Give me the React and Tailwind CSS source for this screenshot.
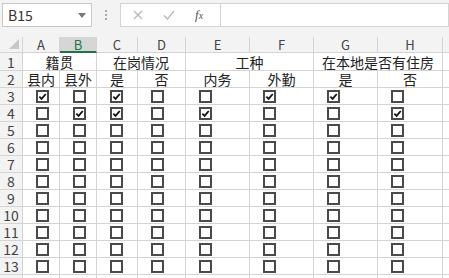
const COLS = [
  { key: 'A', w: 37 },
  { key: 'B', w: 37 },
  { key: 'C', w: 41 },
  { key: 'D', w: 48 },
  { key: 'E', w: 64 },
  { key: 'F', w: 64 },
  { key: 'G', w: 64 },
  { key: 'H', w: 65 },
]

const GROUPS = ['籍贯', '在岗情况', '工种', '在本地是否有住房']
const SUBS = ['县内', '县外', '是', '否', '内务', '外勤', '是', '否']

// checked columns per data row (row 3, row 4); the rest are empty
const CHECKED = {
  3: ['A', 'C', 'F', 'G'],
  4: ['B', 'C', 'E', 'H'],
}

const ROWS = [3, 4, 5, 6, 7, 8, 9, 10, 11, 12, 13]

function CheckBox({ checked }) {
  return (
    <span className="flex h-[13px] w-[13px] items-center justify-center border-2 border-[#4a4a4a] bg-white">
      {checked && (
        <svg viewBox="0 0 10 10" className="h-[9px] w-[9px]">
          <path d="M1.5 5.2 L4 7.6 L8.6 2.2" fill="none" stroke="#111" strokeWidth="2" />
        </svg>
      )}
    </span>
  )
}

function FormulaBar() {
  return (
    <div className="flex h-[37px] items-start bg-[#f3f3f3] pt-[3px]">
      <div className="ml-[2px] flex h-[24px] w-[90px] items-center justify-between border border-[#c8c8c8] bg-white pl-[5px] pr-[5px]">
        <span className="text-[14px] leading-[16px] text-[#333]">B15</span>
        <svg viewBox="0 0 8 5" className="h-[5px] w-[8px]">
          <path d="M0 0 L8 0 L4 5 Z" fill="#777" />
        </svg>
      </div>
      <div className="flex h-[24px] w-[28px] flex-col items-center justify-center gap-[2px]">
        <span className="h-[2px] w-[2px] bg-[#aaa]" />
        <span className="h-[2px] w-[2px] bg-[#aaa]" />
        <span className="h-[2px] w-[2px] bg-[#aaa]" />
      </div>
      <div className="flex h-[24px] w-[100px] items-center border border-r-0 border-[#d4d4d4] bg-white">
        <svg viewBox="0 0 10 10" className="ml-[12px] h-[10px] w-[10px]">
          <path d="M1 1 L9 9 M9 1 L1 9" stroke="#b5b5b5" strokeWidth="1.2" />
        </svg>
        <svg viewBox="0 0 12 10" className="ml-[20px] h-[10px] w-[12px]">
          <path d="M1 5.5 L4.5 9 L11 1" fill="none" stroke="#b5b5b5" strokeWidth="1.2" />
        </svg>
        <span className="ml-[20px] font-['Liberation_Serif',serif] text-[13px] leading-[16px] italic text-[#555]">
          f<span className="text-[10px]">x</span>
        </span>
      </div>
      <div className="h-[24px] flex-1 border border-[#d4d4d4] bg-white" />
    </div>
  )
}

export default function App() {
  const gridCols =
    'grid grid-cols-[23px_37px_37px_41px_48px_64px_64px_64px_65px_1fr] grid-rows-[16px_18px_17px_repeat(12,17px)]'

  return (
    <div className="h-[278px] w-[449px] overflow-hidden bg-white font-['Noto_Sans_CJK_SC','Noto_Sans',sans-serif] text-[#222]">
      <FormulaBar />

      <div className={gridCols}>
        {/* corner */}
        <div className="relative border-b border-r border-[#d4d4d4] bg-[#f3f3f3]">
          <svg viewBox="0 0 10 10" className="absolute bottom-[3px] right-[3px] h-[10px] w-[10px]">
            <path d="M10 0 L10 10 L0 10 Z" fill="#c8c8c8" />
          </svg>
        </div>
        {COLS.map((c) =>
          c.key === 'B' ? (
            <div
              key={c.key}
              className="flex items-center justify-center border-b-2 border-r border-b-[#217346] border-r-[#d4d4d4] bg-[#d6d6d6] pt-[1px] text-[13px] leading-[14px] text-[#217346]"
            >
              {c.key}
            </div>
          ) : (
            <div
              key={c.key}
              className="flex items-center justify-center border-b border-r border-[#d4d4d4] bg-[#f3f3f3] pt-[1px] text-[13px] leading-[14px] text-[#444]"
            >
              {c.key}
            </div>
          )
        )}
        <div className="border-b border-[#d4d4d4] bg-[#f3f3f3]" />

        {/* row 1: merged group titles */}
        <div className="flex items-center justify-center border-b border-r border-[#d4d4d4] bg-[#f3f3f3] text-[14px] leading-[16px] text-[#444]">
          1
        </div>
        {GROUPS.map((g) => (
          <div
            key={g}
            className="col-span-2 flex items-center justify-center border-b border-r border-[#d4d4d4] text-[14px] leading-[16px]"
          >
            {g}
          </div>
        ))}
        <div className="border-b border-[#d4d4d4]" />

        {/* row 2: sub titles */}
        <div className="flex items-center justify-center border-b border-r border-[#d4d4d4] bg-[#f3f3f3] text-[14px] leading-[16px] text-[#444]">
          2
        </div>
        {SUBS.map((s, i) => (
          <div
            key={i}
            className="flex items-center justify-center border-b border-r border-[#d4d4d4] text-[14px] leading-[16px]"
          >
            {s}
          </div>
        ))}
        <div className="border-b border-[#d4d4d4]" />

        {/* rows 3-13: checkboxes */}
        {ROWS.map((r) => (
          <Row key={r} n={r} />
        ))}

        {/* row 14, cut off */}
        <div className="border-r border-[#d4d4d4] bg-[#f3f3f3]" />
        {COLS.map((c) => (
          <div key={c.key} className="border-r border-[#d4d4d4]" />
        ))}
        <div />
      </div>
    </div>
  )
}

function Row({ n }) {
  const checked = CHECKED[n] || []
  return (
    <>
      <div className="flex items-center justify-center border-b border-r border-[#d4d4d4] bg-[#f3f3f3] text-[14px] leading-[16px] text-[#444]">
        {n}
      </div>
      {COLS.map((c) => (
        <div
          key={c.key}
          className="flex items-center border-b border-r border-[#d4d4d4] pl-[13px]"
        >
          <CheckBox checked={checked.includes(c.key)} />
        </div>
      ))}
      <div className="border-b border-[#d4d4d4]" />
    </>
  )
}
